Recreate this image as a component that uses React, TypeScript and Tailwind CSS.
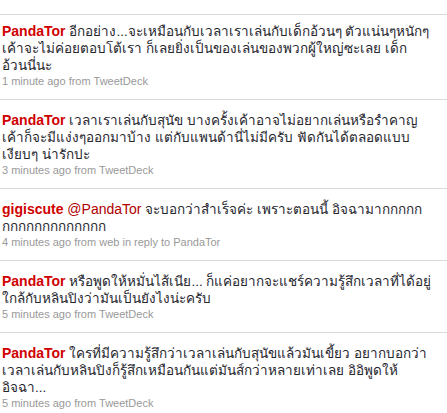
import React from 'react';

interface Tweet {
  user: string;
  mention?: string;
  lines: string[];
  meta: string;
}

const tweets: Tweet[] = [
  {
    user: 'PandaTor',
    lines: [
      'อีกอย่าง...จะเหมือนกับเวลาเราเล่นกับเด็กอ้วนๆ ตัวแน่นๆหนักๆ',
      'เค้าจะไม่ค่อยตอบโต้เรา ก็เลยยิ่งเป็นของเล่นของพวกผู้ใหญ่ซะเลย เด็ก',
      'อ้วนนี่นะ',
    ],
    meta: '1 minute ago from TweetDeck',
  },
  {
    user: 'PandaTor',
    lines: [
      'เวลาเราเล่นกับสุนัข บางครั้งเค้าอาจไม่อยากเล่นหรือรำคาญ',
      'เค้าก็จะมีแง่งๆออกมาบ้าง แต่กับแพนด้านี่ไม่มีครับ ฟัดกันได้ตลอดแบบ',
      'เงียบๆ น่ารักปะ',
    ],
    meta: '3 minutes ago from TweetDeck',
  },
  {
    user: 'gigiscute',
    mention: '@PandaTor',
    lines: ['จะบอกว่าสำเร็จค่ะ เพราะตอนนี้ อิจฉามากกกกก', 'กกกกกกกกกกกกก'],
    meta: '4 minutes ago from web in reply to PandaTor',
  },
  {
    user: 'PandaTor',
    lines: [
      'หรือพูดให้หมั่นไส้เนีย... ก็แค่อยากจะแชร์ความรู้สึกเวลาที่ได้อยู่',
      'ใกล้กับหลินปิงว่ามันเป็นยังไงน่ะครับ',
    ],
    meta: '5 minutes ago from TweetDeck',
  },
  {
    user: 'PandaTor',
    lines: [
      'ใครที่มีความรู้สึกว่าเวลาเล่นกับสุนัขแล้วมันเขี้ยว อยากบอกว่า',
      'เวลาเล่นกับหลินปิงก็รู้สึกเหมือนกันแต่มันส์กว่าหลายเท่าเลย อิอิพูดให้',
      'อิจฉา...',
    ],
    meta: '5 minutes ago from TweetDeck',
  },
];

export default function App() {
  return (
    <div className="w-[447px] h-[413px] overflow-hidden bg-white pt-[14px] font-['Liberation_Sans',Tahoma,sans-serif]">
      <ul>
        {tweets.map((t, i) => (
          <li
            key={i}
            className={`border-t border-[#d9d9d9] pl-[2px] pb-[10px] ${i === 0 ? 'pt-[8px]' : 'pt-[12px]'}`}
          >
            <div className="text-[14px] leading-[17px] text-[#26262e]">
              {t.lines.map((line, j) => (
                <div key={j} className="whitespace-nowrap">
                  {j === 0 && (
                    <>
                      <span className="font-bold text-[#d00000]">{t.user}</span>{' '}
                      {t.mention && (
                        <>
                          <span className="text-[#b00000]">{t.mention}</span>{' '}
                        </>
                      )}
                    </>
                  )}
                  <span className="text-[13.5px]">{line}</span>
                </div>
              ))}
            </div>
            <div className="text-[11px] leading-[15px] text-[#999999]">{t.meta}</div>
          </li>
        ))}
      </ul>
    </div>
  );
}
